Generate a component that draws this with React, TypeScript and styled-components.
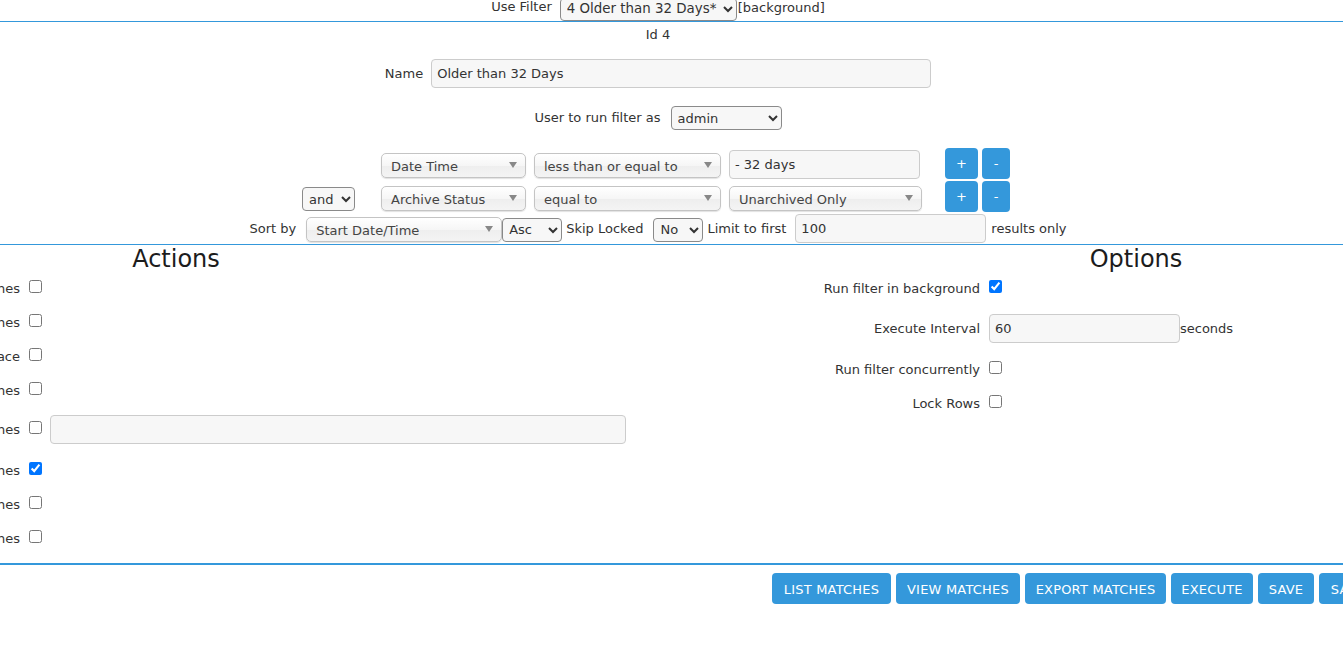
import styled, { createGlobalStyle } from 'styled-components';

const GlobalStyle = createGlobalStyle`
  html, body {
    margin: 0;
    padding: 0;
    background: #fff;
  }
  body {
    font-family: "DejaVu Sans", Verdana, sans-serif;
    font-size: 13px;
    color: #333;
    overflow: hidden;
  }
`;

const Page = styled.div`
  width: 1343px;
  height: 651px;
  overflow: hidden;
`;

const Header = styled.div`
  height: 21px;
  border-bottom: 1px solid #3498db;
  width: 1316px;
  box-sizing: content-box;
  padding-right: 27px;
  display: flex;
  justify-content: center;
  align-items: flex-start;
`;

const HeaderLabel = styled.span`
  margin: 0 8px 0 0;
  line-height: 14px;
`;

const HeaderNote = styled.span`
  line-height: 16px;
`;

const FilterForm = styled.form`
  margin: 0;
  width: 1316px;
`;

const IdRow = styled.div`
  text-align: center;
  height: 16px;
  line-height: 16px;
  margin-top: 5px;
`;

const Row = styled.div<{ $top: number; $gap?: number }>`
  display: flex;
  justify-content: center;
  align-items: center;
  gap: ${(p) => p.$gap ?? 8}px;
  margin-top: ${(p) => p.$top}px;
`;

const UserLabel = styled.label`
  margin-bottom: 2px;
`;

const TextInput = styled.input<{ $width: number }>`
  box-sizing: border-box;
  width: ${(p) => p.$width}px;
  height: 29px;
  padding: 0 5px;
  background: #f7f7f7;
  border: 1px solid #ccc;
  border-radius: 4px;
  font: inherit;
  color: #333;
  outline: none;
`;

const NativeSelect = styled.select<{ $width: number; $height?: number }>`
  box-sizing: border-box;
  width: ${(p) => p.$width}px;
  height: ${(p) => p.$height ?? 24}px;
  padding: 0 0 0 2px;
  background: #f7f7f7;
  border: 1px solid #8a8a8a;
  border-radius: 4px;
  font: inherit;
  color: #333;
`;

const TopSelect = styled(NativeSelect)`
  margin-top: -2px;
  margin-right: 1px;
  padding-bottom: 2px;
  font-size: 13.4px;
`;

const Terms = styled.div`
  display: grid;
  grid-template-columns: 79px 153px 195px 216px 37px 28px;
  justify-content: center;
  row-gap: 2px;
  margin-top: 18px;
  padding-right: 4px;
  align-items: end;
`;

const Chosen = styled.div<{ $width: number }>`
  position: relative;
  box-sizing: border-box;
  width: ${(p) => p.$width}px;
  height: 25px;
  line-height: 25px;
  padding-left: 9px;
  margin-bottom: 1px;
  border: 1px solid #c4c4c4;
  border-radius: 5px;
  background: linear-gradient(#fff 0%, #f6f6f6 50%, #eee 52%, #f4f4f4 100%);
  box-shadow: 0 1px 1px rgba(0, 0, 0, 0.12);
  color: #444;
  white-space: nowrap;
  &::after {
    content: '';
    position: absolute;
    right: 8px;
    top: 8px;
    border-left: 4px solid transparent;
    border-right: 4px solid transparent;
    border-top: 6px solid #888;
  }
`;

const AndSelect = styled(NativeSelect)`
  margin-bottom: 1px;
`;

const TermButton = styled.button<{ $width: number }>`
  width: ${(p) => p.$width}px;
  height: 31px;
  padding: 0;
  border: 0;
  border-radius: 4px;
  background: #3498db;
  color: #fff;
  font: inherit;
`;

const SortLabel = styled.span<{ $left?: number }>`
  margin-left: ${(p) => p.$left ?? 0}px;
  margin-bottom: 2px;
  white-space: nowrap;
`;

const SortRow = styled.div`
  display: flex;
  justify-content: center;
  align-items: center;
  height: 29px;
  margin-top: 3px;
`;

const SortChosen = styled(Chosen)`
  margin: 0 0 0 10px;
`;

const SortSelect = styled(NativeSelect)<{ $left?: number }>`
  margin-left: ${(p) => p.$left ?? 0}px;
`;

const SortInput = styled(TextInput)`
  margin: 0 5px 2px 9px;
`;

const Columns = styled.div`
  display: grid;
  grid-template-columns: 952px 968px;
  width: 1920px;
  margin-left: -300px;
  height: 318px;
  border-top: 1px solid #3498db;
  border-bottom: 2px solid #3498db;
  box-sizing: content-box;
`;

const Column = styled.div``;

const Heading = styled.h2`
  margin: 0;
  height: 26px;
  padding-top: 1px;
  margin-bottom: -1px;
  font-size: 24px;
  font-weight: normal;
  line-height: 26px;
  text-align: center;
  color: #1c1c1c;
`;

const OptionRow = styled.div<{ $tall?: boolean }>`
  display: flex;
  align-items: center;
  height: ${(p) => (p.$tall ? 46 : 34)}px;
  padding-bottom: ${(p) => (p.$tall ? 2 : 0)}px;
  box-sizing: border-box;
`;

const IntervalRow = styled(OptionRow)`
  margin-top: 1px;
`;

const OptionLabel = styled.label<{ $width: number }>`
  flex: none;
  width: ${(p) => p.$width}px;
  margin-right: 9px;
  text-align: right;
  white-space: nowrap;
`;

const Check = styled.input.attrs({ type: 'checkbox' })`
  width: 13px;
  height: 13px;
  margin: 0 0 3px 0;
`;

const ActionInput = styled(TextInput)`
  margin-left: 8px;
`;

const Footer = styled.div`
  display: flex;
  gap: 5px;
  margin: 8px 0 0 772px;
  width: 700px;
`;

const ActionButton = styled.button<{ $width: number }>`
  flex: none;
  width: ${(p) => p.$width}px;
  height: 31px;
  padding: 1px 0 0;
  border: 0;
  border-radius: 4px;
  background: #3498db;
  color: #fff;
  font: inherit;
  letter-spacing: 0.2px;
  text-transform: uppercase;
  white-space: nowrap;
`;

const actions = [
  { label: 'Archive all matches' },
  { label: 'Unarchive all matches' },
  { label: 'Update used disk space' },
  { label: 'Create video for all matches' },
  { label: 'Execute command on all matches', input: true },
  { label: 'Delete all matches', checked: true },
  { label: 'Copy all matches' },
  { label: 'Move all matches' },
];

const buttons = [
  { label: 'List Matches', width: 119 },
  { label: 'View Matches', width: 124 },
  { label: 'Export Matches', width: 141 },
  { label: 'Execute', width: 82 },
  { label: 'Save', width: 56 },
  { label: 'Save as', width: 80 },
];

const App = () => {
  return (
    <Page>
      <GlobalStyle />
      <Header>
        <HeaderLabel>Use Filter</HeaderLabel>
        <TopSelect $width={177} $height={23} defaultValue="4">
          <option value="4">4 Older than 32 Days*</option>
        </TopSelect>
        <HeaderNote>[background]</HeaderNote>
      </Header>
      <FilterForm>
        <IdRow>Id 4</IdRow>
        <Row $top={16}>
          <label>Name</label>
          <TextInput $width={500} defaultValue="Older than 32 Days" />
        </Row>
        <Row $top={18} $gap={10}>
          <UserLabel>User to run filter as</UserLabel>
          <NativeSelect $width={111} defaultValue="admin">
            <option value="admin">admin</option>
          </NativeSelect>
        </Row>
        <Terms>
          <span />
          <Chosen $width={145}>Date Time</Chosen>
          <Chosen $width={187}>less than or equal to</Chosen>
          <TextInput $width={191} defaultValue="- 32 days" />
          <TermButton $width={33}>+</TermButton>
          <TermButton $width={28}>-</TermButton>
          <AndSelect $width={53} defaultValue="and">
            <option value="and">and</option>
          </AndSelect>
          <Chosen $width={145}>Archive Status</Chosen>
          <Chosen $width={187}>equal to</Chosen>
          <Chosen $width={193}>Unarchived Only</Chosen>
          <TermButton $width={33}>+</TermButton>
          <TermButton $width={28}>-</TermButton>
        </Terms>
        <SortRow>
          <SortLabel>Sort by</SortLabel>
          <SortChosen $width={196}>Start Date/Time</SortChosen>
          <SortSelect $width={60} defaultValue="asc">
            <option value="asc">Asc</option>
          </SortSelect>
          <SortLabel $left={4}>Skip Locked</SortLabel>
          <SortSelect $width={50} $left={10} defaultValue="no">
            <option value="no">No</option>
          </SortSelect>
          <SortLabel $left={4}>Limit to first</SortLabel>
          <SortInput $width={191} defaultValue="100" />
          <SortLabel>results only</SortLabel>
        </SortRow>
      </FilterForm>
      <Columns>
        <Column>
          <Heading>Actions</Heading>
          {actions.map((a) => (
            <OptionRow key={a.label} $tall={a.input}>
              <OptionLabel $width={320}>{a.label}</OptionLabel>
              <Check defaultChecked={a.checked} />
              {a.input && <ActionInput $width={576} />}
            </OptionRow>
          ))}
        </Column>
        <Column>
          <Heading>Options</Heading>
          <OptionRow>
            <OptionLabel $width={328}>Run filter in background</OptionLabel>
            <Check defaultChecked />
          </OptionRow>
          <IntervalRow $tall>
            <OptionLabel $width={328}>Execute Interval</OptionLabel>
            <TextInput $width={191} defaultValue="60" />
            <span>seconds</span>
          </IntervalRow>
          <OptionRow>
            <OptionLabel $width={328}>Run filter concurrently</OptionLabel>
            <Check />
          </OptionRow>
          <OptionRow>
            <OptionLabel $width={328}>Lock Rows</OptionLabel>
            <Check />
          </OptionRow>
        </Column>
      </Columns>
      <Footer>
        {buttons.map((b) => (
          <ActionButton key={b.label} $width={b.width}>
            {b.label}
          </ActionButton>
        ))}
      </Footer>
    </Page>
  );
};

export default App;
